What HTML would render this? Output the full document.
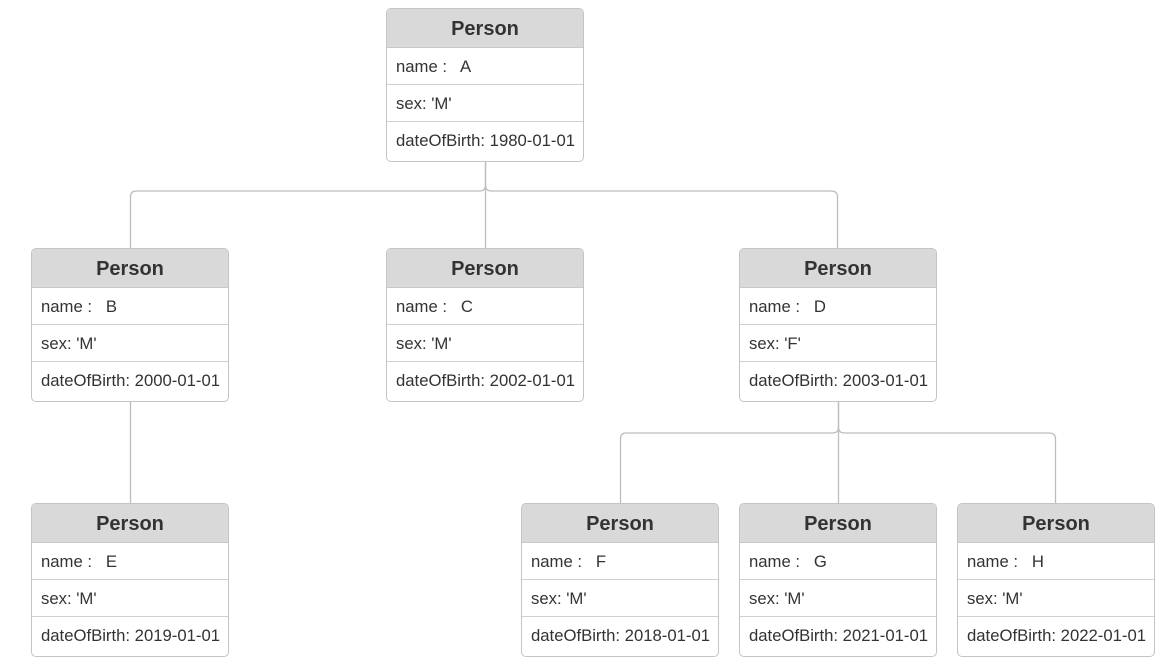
<!DOCTYPE html>
<html><head><style>
body{margin:0;width:1172px;height:663px;background:#fff;position:relative;overflow:hidden;font-family:"Liberation Sans",sans-serif;color:#333}
.b{position:absolute;width:196px;height:152px;border:1px solid #c4c4c4;border-radius:5px;overflow:hidden;background:#fff}
.h{height:38px;background:#d9d9d9;border-bottom:1px solid #c8c8c8;text-align:center;font-weight:bold;font-size:20px;line-height:41px}
.r{height:36px;border-bottom:1px solid #d0d0d0;font-size:16.7px;line-height:37px;padding-left:9px;white-space:pre}
.r:last-child{border-bottom:none}
svg{position:absolute;left:0;top:0}
</style></head><body>
<svg width="1172" height="663"><g fill="none" stroke="#bdbdbd" stroke-width="1.3">
<path d="M485.5 161V185Q485.5 191 479.5 191H136Q130.5 191 130.5 197V248"/>
<path d="M485.5 185Q485.5 191 491.5 191H831Q837.5 191 837.5 197V248"/>
<path d="M485.5 161V248"/>
<path d="M130.5 401V503"/>
<path d="M838.5 401V427Q838.5 433 832.5 433H626Q620.5 433 620.5 439V503"/>
<path d="M838.5 427Q838.5 433 844.5 433H1049Q1055.5 433 1055.5 439V503"/>
<path d="M838.5 401V503"/>
</g></svg>
<div class="b" style="left:386px;top:8px"><div class="h">Person</div><div class="r">name :   A</div><div class="r">sex: 'M'</div><div class="r">dateOfBirth: 1980-01-01</div></div>
<div class="b" style="left:31px;top:248px"><div class="h">Person</div><div class="r">name :   B</div><div class="r">sex: 'M'</div><div class="r">dateOfBirth: 2000-01-01</div></div>
<div class="b" style="left:386px;top:248px"><div class="h">Person</div><div class="r">name :   C</div><div class="r">sex: 'M'</div><div class="r">dateOfBirth: 2002-01-01</div></div>
<div class="b" style="left:739px;top:248px"><div class="h">Person</div><div class="r">name :   D</div><div class="r">sex: 'F'</div><div class="r">dateOfBirth: 2003-01-01</div></div>
<div class="b" style="left:31px;top:503px"><div class="h">Person</div><div class="r">name :   E</div><div class="r">sex: 'M'</div><div class="r">dateOfBirth: 2019-01-01</div></div>
<div class="b" style="left:521px;top:503px"><div class="h">Person</div><div class="r">name :   F</div><div class="r">sex: 'M'</div><div class="r">dateOfBirth: 2018-01-01</div></div>
<div class="b" style="left:739px;top:503px"><div class="h">Person</div><div class="r">name :   G</div><div class="r">sex: 'M'</div><div class="r">dateOfBirth: 2021-01-01</div></div>
<div class="b" style="left:957px;top:503px"><div class="h">Person</div><div class="r">name :   H</div><div class="r">sex: 'M'</div><div class="r">dateOfBirth: 2022-01-01</div></div>
</body></html>
